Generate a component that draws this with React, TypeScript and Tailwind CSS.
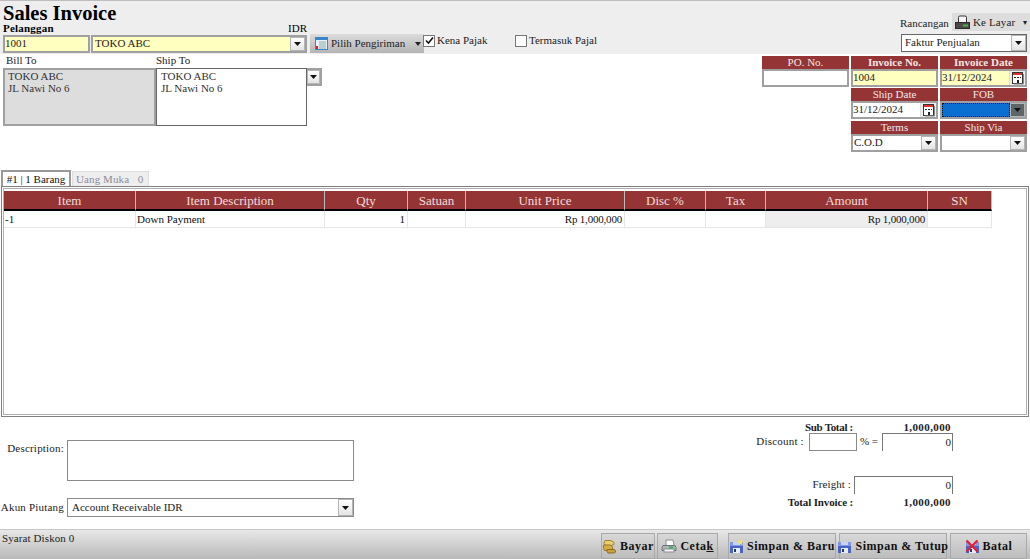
const Arrow = ({ dark = false, narrow = false }: { dark?: boolean; narrow?: boolean }) => (
  <span className={`flex h-full shrink-0 items-center justify-center border border-[#b5b5b5] ${narrow ? "w-[13px]" : "w-[15px]"} ${dark ? "bg-[#5f6468]" : "bg-gradient-to-b from-white to-[#e4e4e4]"}`}>
    <svg width="7" height="4" viewBox="0 0 7 4">
      <path d="M0 0h7L3.500 4z" fill="#111" />
    </svg>
  </span>
);

const CalendarIcon = () => (
  <span className="flex h-full w-[16px] shrink-0 items-center justify-center border-l border-[#ddd] bg-[#eeeeee]">
    <svg width="14" height="14" viewBox="0 0 14 14">
      <rect x="1.500" y="1.500" width="10" height="11" fill="#fff" stroke="#333" />
      <rect x="2" y="2" width="9" height="2" fill="#d33" />
      <path d="M3 6h2v1H3zM6 6h2v1H6zM9 6h1v1H9zM6 9h2v3H6z" fill="#222" />
      <path d="M12.500 3v10H3" fill="none" stroke="#888" />
    </svg>
  </span>
);

const FieldHead = ({ label, bold = false }: { label: string; bold?: boolean }) => (
  <div className={`h-[13px] bg-[#943434] text-center text-[11px] leading-[13px] text-[#f3e6e6] ${bold ? "font-bold" : ""}`}>
    {label}
  </div>
);

const columns = [
  { label: "Item", value: "-1", cls: "pl-[1px]" },
  { label: "Item Description", value: "Down Payment", cls: "pl-[1px]" },
  { label: "Qty", value: "1", cls: "pr-[2px] text-right" },
  { label: "Satuan", value: "", cls: "" },
  { label: "Unit Price", value: "Rp 1,000,000", cls: "pr-[2px] text-right tracking-[-0.2px]" },
  { label: "Disc %", value: "", cls: "" },
  { label: "Tax", value: "", cls: "" },
  { label: "Amount", value: "Rp 1,000,000", cls: "pr-[2px] text-right tracking-[-0.2px] bg-[#eeeeee]" },
  { label: "SN", value: "", cls: "" },
];

const FooterButton = ({ label, icon, width, ml = "" }: { label: React.ReactNode; icon: React.ReactNode; width: string; ml?: string }) => (
  <div className={`flex h-[26px] items-center justify-center gap-[3px] border border-[#a9a9a9] bg-gradient-to-b from-[#d8d8d8] to-[#bdbdbd] text-[12px] font-bold tracking-[0.5px] text-[#111] ${width} ${ml}`}>
    {icon}
    <span className="whitespace-nowrap">{label}</span>
  </div>
);

const SaveIcon = ({ star = false, cross = false }: { star?: boolean; cross?: boolean }) => (
  <svg className="shrink-0" width="15" height="15" viewBox="0 0 15 15">
    <rect x="1" y="3" width="13" height="11" fill="#4a63c4" />
    <rect x="1" y="3" width="13" height="4" fill="#7f97e6" />
    <rect x="4" y="3" width="7" height="3" fill="#c9d3f2" />
    <rect x="4" y="9" width="7" height="5" fill="#e8ecf6" />
    <rect x="5" y="10" width="2" height="3" fill="#26356e" />
    {star && <path d="M11.500 0l.9 2.100 2.100.4-1.500 1.500.3 2.100-1.800-1-1.800 1 .3-2.100L8.500 2.500l2.100-.4z" fill="#f6de6c" />}
    {cross && <path d="M1.500 1.500l11 11M12.500 1.500l-11 11" stroke="#ea1c2c" strokeWidth="2.200" />}
  </svg>
);

const App = () => {
  return (
    <div className="flex h-[559px] w-[1030px] flex-col overflow-hidden bg-white font-['Liberation_Serif',serif] text-[11px] leading-[13px] text-[#222]">
      {/* Header */}
      <div className="relative h-[54px] shrink-0 border-t border-[#bdbdbd] bg-[#eeeeee] pl-[3px]">
        <h1 className="h-[21px] pt-[1px] text-[20.500px] font-bold leading-[23px] text-black">Sales Invoice</h1>
        <div className="flex h-[13px] w-[304px] justify-between leading-[13px] text-black">
          <span className="font-bold tracking-[0.2px]">Pelanggan</span>
          <span>IDR</span>
        </div>
        <div className="flex h-[18px] items-start">
          <div className="flex h-[18px] w-[87px] items-center border-2 border-[#a0a0a0] bg-[#ffffc0] pb-[1px]">1001</div>
          <div className="ml-[1px] flex h-[18px] w-[216px] items-center justify-between border-2 border-[#a0a0a0] bg-[#ffffc0] pl-[2px]">
            <span className="pb-[1px]">TOKO ABC</span>
            <Arrow />
          </div>
          <div className="ml-[3px] mt-[-1px] flex h-[19px] w-[114px] items-center bg-gradient-to-b from-[#dcdcdc] to-[#b4b4b4] pl-[5px]">
            <svg width="13" height="13" viewBox="0 0 13 13">
              <rect x="0.500" y="0.500" width="12" height="12" fill="#e8f2fb" stroke="#3a86c8" />
              <rect x="1" y="1" width="11" height="2" fill="#3a86c8" />
              <path d="M4 5h7M4 7h7M4 9h7M4 11h7" stroke="#8aa" />
              <rect x="1" y="9" width="2" height="3" fill="#e02020" />
            </svg>
            <span className="ml-[3px] whitespace-nowrap">Pilih Pengiriman</span>
            <svg className="ml-[10px]" width="6" height="4" viewBox="0 0 6 4">
              <path d="M0 0h6L3 4z" fill="#222" />
            </svg>
          </div>
          <div className="ml-[-1px] mt-[-1px] flex h-[13px] items-center">
            <span className="flex h-[12px] w-[12px] items-center justify-center border border-[#777] bg-white">
              <svg width="9" height="9" viewBox="0 0 9 9">
                <path d="M1 4.500l2.500 2.500L8 1.500" fill="none" stroke="#111" strokeWidth="1.600" />
              </svg>
            </span>
            <span className="ml-[2px] w-[67px]">Kena Pajak</span>
            <span className="ml-[11px] h-[12px] w-[12px] border border-[#777] bg-white" />
            <span className="ml-[2px] whitespace-nowrap">Termasuk Pajal</span>
          </div>
        </div>
        {/* Rancangan */}
        <div className="absolute right-[3px] top-[12px] flex w-[126px] flex-col items-start">
          <div className="flex h-[18px] w-[129px] items-center">
            <span className="ml-[-1px] pt-[3px]">Rancangan</span>
            <div className="ml-[3px] flex h-[18px] flex-1 items-center bg-[#dddddd] pl-[3px]">
              <svg width="15" height="14" viewBox="0 0 15 14">
                <path d="M3.500 7V2.500Q3.500 1 5 1h5q1.500 0 1.500 1.500V7" fill="#f6f6f6" stroke="#333" />
                <rect x="0.500" y="7.500" width="14" height="6" fill="#4a4a4a" stroke="#2a2a2a" />
                <rect x="8" y="9.500" width="5" height="2" fill="#49b04c" />
              </svg>
              <span className="ml-[3px] whitespace-nowrap tracking-[0.15px]">Ke Layar</span>
              <span className="ml-[8px] text-[8px]">▾</span>
            </div>
          </div>
          <div className="mt-[3px] flex h-[18px] w-[126px] items-center justify-between border border-[#666] bg-white pl-[3px]">
            <span className="pb-[1px]">Faktur Penjualan</span>
            <Arrow />
          </div>
        </div>
      </div>

      {/* Address and invoice fields */}
      <div className="flex h-[116px] shrink-0 items-start justify-between pl-[3px] pr-[3px]">
        <div className="flex">
          <div className="w-[153px]">
            <div className="h-[14px] pl-[3px]">Bill To</div>
            <div className="h-[58px] border-2 border-[#a0a0a0] bg-[#dddddd] pl-[3px] leading-[12px] text-[#333]">
              TOKO ABC
              <br />
              JL Nawi No 6
            </div>
          </div>
          <div className="w-[151px]">
            <div className="h-[14px]">Ship To</div>
            <div className="h-[58px] border border-[#666] bg-white pl-[4px] pt-[1px] leading-[12px] text-[#333]">
              TOKO ABC
              <br />
              JL Nawi No 6
            </div>
          </div>
          <div className="mt-[14px] h-[18px] border-2 border-l-0 border-[#a0a0a0]">
            <Arrow narrow />
          </div>
        </div>
        <div className="mt-[2px] grid grid-cols-[87px_87px_87px] gap-x-[2px] gap-y-[1px]">
          <div className="h-[31px]">
            <FieldHead label="PO. No." />
            <div className="h-[18px] border-2 border-[#a0a0a0] bg-white" />
          </div>
          <div className="h-[31px]">
            <FieldHead label="Invoice No." bold />
            <div className="flex h-[18px] items-center border-2 border-[#a0a0a0] bg-[#ffffc0] pb-[1px]">1004</div>
          </div>
          <div className="h-[31px]">
            <FieldHead label="Invoice Date" bold />
            <div className="flex h-[18px] items-center justify-between border-2 border-[#a0a0a0] bg-[#ffffc0]">
              <span className="pb-[2px]">31/12/2024</span>
              <CalendarIcon />
            </div>
          </div>
          <div className="col-start-2 h-[31px]">
            <FieldHead label="Ship Date" />
            <div className="flex h-[18px] items-center justify-between border-2 border-[#a0a0a0] bg-white">
              <span className="pb-[1px]">31/12/2024</span>
              <CalendarIcon />
            </div>
          </div>
          <div className="h-[31px]">
            <FieldHead label="FOB" />
            <div className="flex h-[18px] items-center justify-between border-2 border-[#a0a0a0] bg-[#0a6fd1]">
              <span className="h-full flex-1 border border-dotted border-[#111]" />
              <Arrow dark />
            </div>
          </div>
          <div className="col-start-2 mt-[1px] h-[31px]">
            <FieldHead label="Terms" />
            <div className="flex h-[18px] items-center justify-between border-2 border-[#a0a0a0] bg-white pl-[1px]">
              <span className="pb-[2px]">C.O.D</span>
              <Arrow />
            </div>
          </div>
          <div className="mt-[1px] h-[31px]">
            <FieldHead label="Ship Via" />
            <div className="flex h-[18px] items-center justify-end border-2 border-[#a0a0a0] bg-white">
              <Arrow />
            </div>
          </div>
        </div>
      </div>

      {/* Tabs */}
      <div className="flex h-[16px] shrink-0 items-end pl-[1px]">
        <div className="flex h-[16px] w-[70px] items-center justify-center border-2 border-b-0 border-[#999] bg-white text-[#111]">#1 | 1 Barang</div>
        <div className="ml-[1px] flex h-[15px] w-[77px] items-center border border-b-0 border-[#ddd] bg-[#eeeeee] pl-[3px] tracking-[0.1px] text-[#8c8c9c]">
          <span className="whitespace-pre">Uang Muka   0</span>
        </div>
      </div>

      {/* Grid */}
      <div className="mx-[1px] h-[231px] shrink-0 border border-[#808080] p-[1px]">
        <div className="h-full border border-[#b0b0b0] pt-[2px]">
          <div className="grid w-fit grid-cols-[132px_189px_83px_58px_159px_81px_60px_162px_64px]">
            {columns.map((c) => (
              <div key={c.label} className="flex h-[20px] items-center justify-center border-b-2 border-r border-b-black border-r-[#bbb] bg-[#943434] text-[13px] text-[#f0dcdc]">
                {c.label}
              </div>
            ))}
            {columns.map((c) => (
              <div key={c.label} className={`h-[17px] border-b border-r border-[#e6e6e6] leading-[17px] text-[#111] ${c.cls}`}>
                {c.value}
              </div>
            ))}
          </div>
        </div>
      </div>

      {/* Footer form */}
      <div className="flex flex-1 items-start justify-between">
        <div className="w-[354px] pt-[23px]">
          <div className="flex items-start">
            <span className="w-[64px] whitespace-nowrap pt-[2px] text-right tracking-[0.2px]">Description:</span>
            <div className="ml-[3px] h-[41px] flex-1 border border-[#8a8a8a] bg-white" />
          </div>
          <div className="mt-[17px] flex items-center">
            <span className="w-[64px] whitespace-nowrap text-right tracking-[0.2px]">Akun Piutang</span>
            <div className="ml-[3px] flex h-[19px] flex-1 items-center justify-between border border-[#8a8a8a] bg-white pl-[4px]">
              <span>Account Receivable IDR</span>
              <Arrow />
            </div>
          </div>
        </div>
        <div className="mr-[77px] w-[230px] pt-[4px]">
          <div className="flex h-[12px] items-center justify-end font-bold">
            <span className="mr-[50px] tracking-[-0.3px]">Sub Total :</span>
            <span className="w-[50px] pr-[2px] text-right tracking-[0.4px]">1,000,000</span>
          </div>
          <div className="flex h-[18px] items-center justify-end">
            <span className="pb-[2px] tracking-[0.2px]">Discount :</span>
            <div className="ml-[5px] h-[18px] w-[48px] border border-[#8a8a8a] bg-white" />
            <span className="ml-[3px] pb-[2px]">% =</span>
            <div className="ml-[4px] h-[18px] w-[71px] border border-b-0 border-[#777] bg-white pr-[1px] text-right leading-[16px]">0</div>
          </div>
          <div className="mt-[25px] flex h-[18px] items-center justify-end">
            <span className="pb-[2px] tracking-[0.1px]">Freight :</span>
            <div className="ml-[3px] h-[18px] w-[99px] border border-b-0 border-[#777] bg-white pr-[1px] text-right leading-[16px]">0</div>
          </div>
          <div className="mt-[1px] flex h-[14px] items-center justify-end font-bold">
            <span className="mr-[50px] tracking-[-0.15px]">Total Invoice :</span>
            <span className="w-[50px] pr-[2px] text-right tracking-[0.4px]">1,000,000</span>
          </div>
        </div>
      </div>

      {/* Bottom bar */}
      <div className="flex h-[30px] shrink-0 items-end justify-between border-t border-[#c8c8c8] bg-gradient-to-b from-[#e8e8e8] to-[#b9b9b9] pl-[2px] pr-[3px]">
        <span className="mb-auto mt-[2px] tracking-[0.1px]">Syarat Diskon 0</span>
        <div className="flex items-end">
          <FooterButton
            width="w-[54px]"
            label="Bayar"
            icon={
              <svg className="shrink-0" width="15" height="15" viewBox="0 0 15 15">
                <path d="M3 1.500h6l3 2v2l-3 1H4l-2-2z" fill="#e8cf74" stroke="#a5812c" />
                <path d="M1.500 6h7l2 2v2.500l-2 1h-6l-1-2z" fill="#d6ae3f" stroke="#9a7526" />
                <path d="M5 10.500h7l1.500 1v1.500l-1 1H6l-1-1.500z" fill="#c9a23a" stroke="#8d6b22" />
              </svg>
            }
          />
          <FooterButton
            width="w-[61px]"
            ml="ml-[2px]"
            label={
              <>
                Ceta<span className="underline">k</span>
              </>
            }
            icon={
              <svg className="shrink-0" width="16" height="14" viewBox="0 0 16 14">
                <path d="M5 6V1h7l1 5" fill="#fdfdfd" stroke="#8a8f94" />
                <path d="M2 6.500h12l1 2v3H1v-3z" fill="#aeb5b8" stroke="#6c7378" />
                <rect x="3" y="10" width="10" height="3" fill="#f4f4f4" stroke="#8a8f94" />
                <rect x="8" y="7.500" width="4" height="2" fill="#34b24a" />
              </svg>
            }
          />
          <FooterButton width="w-[108px]" ml="ml-[10px]" label="Simpan & Baru" icon={<SaveIcon star />} />
          <FooterButton width="w-[108px]" ml="ml-[3px]" label="Simpan & Tutup" icon={<SaveIcon />} />
          <FooterButton width="w-[77px]" ml="ml-[3px]" label="Batal" icon={<SaveIcon cross />} />
        </div>
      </div>
    </div>
  );
};

export default App;
